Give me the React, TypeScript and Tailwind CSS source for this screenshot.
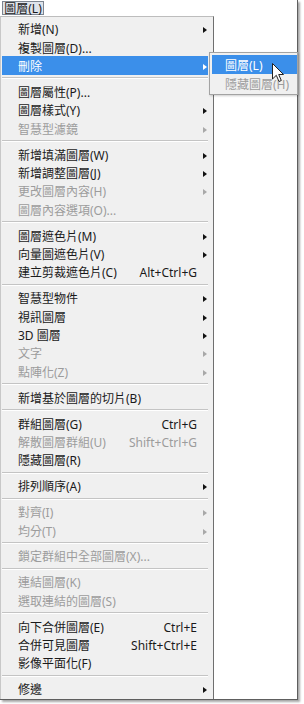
import React from 'react';

type Item =
    | { sep: true }
    | { sep?: false; label: string; shortcut?: string; sub?: boolean; disabled?: boolean; active?: boolean };

const ITEMS: Item[] = [
    { label: '新增(N)', sub: true },
    { label: '複製圖層(D)...' },
    { label: '刪除', sub: true, active: true },
    { sep: true },
    { label: '圖層屬性(P)...' },
    { label: '圖層樣式(Y)', sub: true },
    { label: '智慧型濾鏡', sub: true, disabled: true },
    { sep: true },
    { label: '新增填滿圖層(W)', sub: true },
    { label: '新增調整圖層(J)', sub: true },
    { label: '更改圖層內容(H)', sub: true, disabled: true },
    { label: '圖層內容選項(O)...', disabled: true },
    { sep: true },
    { label: '圖層遮色片(M)', sub: true },
    { label: '向量圖遮色片(V)', sub: true },
    { label: '建立剪裁遮色片(C)', shortcut: 'Alt+Ctrl+G' },
    { sep: true },
    { label: '智慧型物件', sub: true },
    { label: '視訊圖層', sub: true },
    { label: '3D 圖層', sub: true },
    { label: '文字', sub: true, disabled: true },
    { label: '點陣化(Z)', sub: true, disabled: true },
    { sep: true },
    { label: '新增基於圖層的切片(B)' },
    { sep: true },
    { label: '群組圖層(G)', shortcut: 'Ctrl+G' },
    { label: '解散圖層群組(U)', shortcut: 'Shift+Ctrl+G', disabled: true },
    { label: '隱藏圖層(R)' },
    { sep: true },
    { label: '排列順序(A)', sub: true },
    { sep: true },
    { label: '對齊(I)', sub: true, disabled: true },
    { label: '均分(T)', sub: true, disabled: true },
    { sep: true },
    { label: '鎖定群組中全部圖層(X)...', disabled: true },
    { sep: true },
    { label: '連結圖層(K)', disabled: true },
    { label: '選取連結的圖層(S)', disabled: true },
    { sep: true },
    { label: '向下合併圖層(E)', shortcut: 'Ctrl+E' },
    { label: '合併可見圖層', shortcut: 'Shift+Ctrl+E' },
    { label: '影像平面化(F)' },
    { sep: true },
    { label: '修邊', sub: true },
];

const Arrow: React.FC<{ tone: 'normal' | 'disabled' | 'active' }> = ({ tone }) => {
    const cls =
        tone === 'active' ? 'border-l-white' : tone === 'disabled' ? 'border-l-[#a8a8a8]' : 'border-l-[#111]';
    return <span className={`h-0 w-0 border-y-[3.5px] border-l-[4px] border-y-transparent ${cls}`} />;
};

const MenuRow: React.FC<{ item: Exclude<Item, { sep: true }> }> = ({ item }) => {
    const tone = item.active ? 'active' : item.disabled ? 'disabled' : 'normal';
    const text = tone === 'active' ? 'text-white' : tone === 'disabled' ? 'text-[#9c9c9c]' : 'text-[#1a1a1a]';
    return (
        <div
            className={`flex h-[18.4px] shrink-0 items-center pl-[16px] pt-[3px] ${item.active ? 'bg-[#3b8fea]' : ''} ${text}`}
        >
            <span className="whitespace-nowrap">{item.label}</span>
            <span className="flex-1" />
            {item.shortcut && <span className="whitespace-nowrap">{item.shortcut}</span>}
            <span className="flex w-[11px] items-center pl-[6px]">{item.sub && <Arrow tone={tone} />}</span>
        </div>
    );
};

const App: React.FC = () => {
    return (
        <div
            className="relative h-[704px] w-[304px] bg-white text-[12px] leading-none"
            style={{ fontFamily: '"Noto Sans", "Noto Sans CJK TC", sans-serif' }}
        >
            <div className="flex h-[700px] w-[298px] flex-col overflow-hidden border-b border-r border-[#5e5e5e] bg-white shadow-[2px_2px_2px_rgba(0,0,0,0.35)]">
                {/* menubar */}
                <div className="h-[16px] pl-[2px] pt-[1px]">
                    <div className="flex h-[14px] w-[42px] items-center justify-center border border-[#7d8590] bg-[#dfe3ea] pt-[1px] text-[#1a1a1a]">
                        圖層(L)
                    </div>
                </div>

                <div className="flex flex-1">
                    <div className="flex w-[214px] flex-col border-l border-r border-t border-l-[#c8c8c8] border-r-[#6f6f6f] border-t-[#bdbdbd] bg-[#f0f0f0] pl-[1px] pr-[5px] pt-[2.5px]">
                        {ITEMS.map((item, i) =>
                            item.sep ? (
                                <div key={i} className="flex h-[7.5px] shrink-0 items-center">
                                    <div className="h-[2px] w-[207px] border-b border-b-white bg-[#c4c4c4]" />
                                </div>
                            ) : (
                                <MenuRow key={i} item={item} />
                            )
                        )}
                    </div>
                    <div className="flex-1 bg-white" />
                </div>
            </div>

            {/* submenu of 刪除 */}
            <div className="absolute left-[209px] top-[52px] h-[43px] w-[89px] border border-[#a3a3a3] bg-[#f0f0f0] pl-[2px] pt-[2px] shadow-[1px_1px_2px_rgba(0,0,0,0.2)]">
                <div className="flex h-[19px] items-center bg-[#3b8fea] pl-[13px] pt-[3px] text-white">圖層(L)</div>
                <div className="flex h-[19px] items-center pl-[13px] pt-[3px] text-[#9c9c9c]">隱藏圖層(H)</div>
            </div>

            {/* mouse pointer */}
            <svg className="absolute left-[272px] top-[63px]" width="13" height="20" viewBox="0 0 13 20">
                <path
                    d="M0.5 0.5 L0.5 16 L4.3 12.3 L7 18.5 L9.3 17.5 L6.7 11.5 L11.5 11.5 Z"
                    fill="white"
                    stroke="#222"
                    strokeWidth="1"
                    strokeLinejoin="round"
                />
            </svg>
        </div>
    );
};

export default App;
